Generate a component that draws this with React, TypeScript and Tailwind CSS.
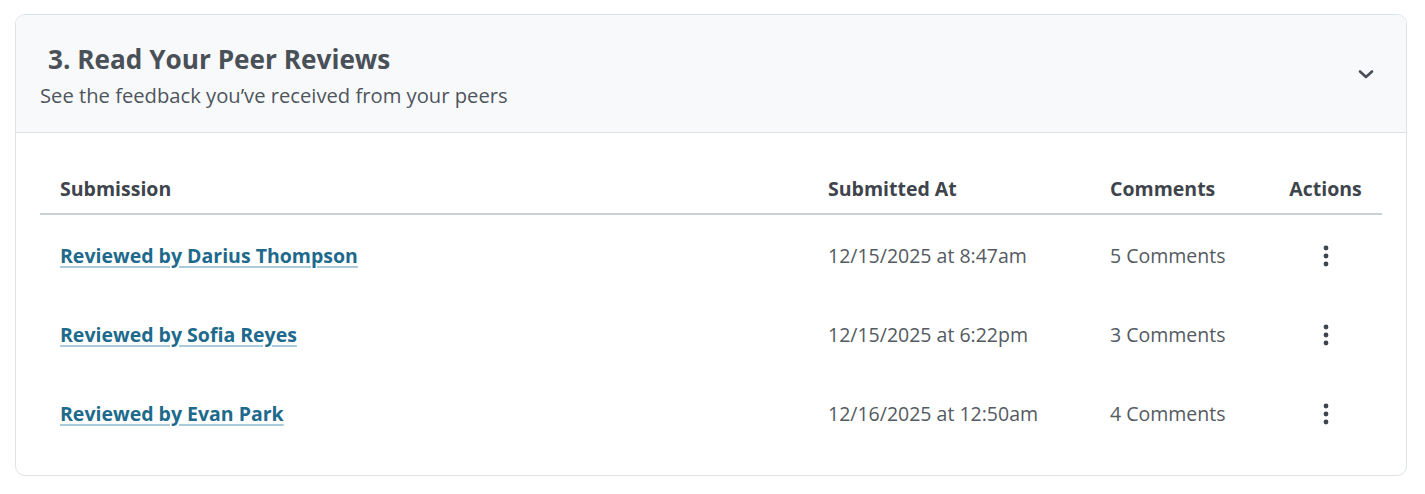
import React from "react";

const rows = [
  { name: "Reviewed by Darius Thompson", at: "12/15/2025 at 8:47am", comments: "5 Comments" },
  { name: "Reviewed by Sofia Reyes", at: "12/15/2025 at 6:22pm", comments: "3 Comments" },
  { name: "Reviewed by Evan Park", at: "12/16/2025 at 12:50am", comments: "4 Comments" },
];

function Kebab() {
  return (
    <svg width="6" height="22" viewBox="0 0 6 22" fill="#3f454c">
      <circle cx="3" cy="3" r="2.4" />
      <circle cx="3" cy="11" r="2.4" />
      <circle cx="3" cy="19" r="2.4" />
    </svg>
  );
}

export default function App() {
  return (
    <div className="bg-white w-[1425px] h-[494px] pt-[14px] pl-[15px] font-['Open_Sans',sans-serif]">
      <div className="w-[1392px] h-[462px] border border-[#dde3e6] rounded-[10px] overflow-hidden bg-white">
        <div className="bg-[#f8f9fb] border-b border-[#dfe4e7] px-6 pt-7 pb-[23px] flex items-center justify-between">
          <div>
            <h2 className="pl-2 text-[26.2px] leading-[32px] font-bold text-[#4a5058]">3. Read Your Peer Reviews</h2>
            <p className="mt-1.5 text-[20.2px] leading-[28px] text-[#4e555d]">See the feedback you’ve received from your peers</p>
          </div>
          <svg width="18" height="12" viewBox="0 0 18 12" className="mr-[7px] mt-[-4px]" fill="none" stroke="#484e56" strokeWidth="2.6" strokeLinecap="round" strokeLinejoin="round">
            <path d="M3 3.5 L9 9 L15 3.5" />
          </svg>
        </div>
        <div className="px-6 pt-[42px]">
          <div className="grid grid-cols-[768px_282px_179px_113px] border-b-2 border-[#c7d0d5] pb-[10px]">
            <div className="px-5 text-[19.5px] leading-[28px] font-bold text-[#3e444b]">Submission</div>
            <div className="px-5 text-[19.5px] leading-[28px] font-bold text-[#3e444b]">Submitted At</div>
            <div className="px-5 text-[19.5px] leading-[28px] font-bold text-[#3e444b]">Comments</div>
            <div className="px-5 text-[19.5px] leading-[28px] font-bold text-[#3e444b] text-center whitespace-nowrap">Actions</div>
          </div>
          <div className="pt-px">
            {rows.map((r) => (
              <div key={r.name} className="grid grid-cols-[768px_282px_179px_113px] h-[79px] items-center">
                <div className="px-5">
                  <a href="#" className="text-[19.5px] leading-[28px] font-bold text-[#1e6a8c] underline decoration-[#a9cbdc] decoration-2 underline-offset-[3px]">
                    {r.name}
                  </a>
                </div>
                <div className="px-5 text-[19.5px] leading-[28px] text-[#545a61] whitespace-nowrap">{r.at}</div>
                <div className="px-5 text-[19.5px] leading-[28px] text-[#545a61] whitespace-nowrap">{r.comments}</div>
                <div className="px-5 flex justify-center">
                  <Kebab />
                </div>
              </div>
            ))}
          </div>
        </div>
      </div>
    </div>
  );
}
